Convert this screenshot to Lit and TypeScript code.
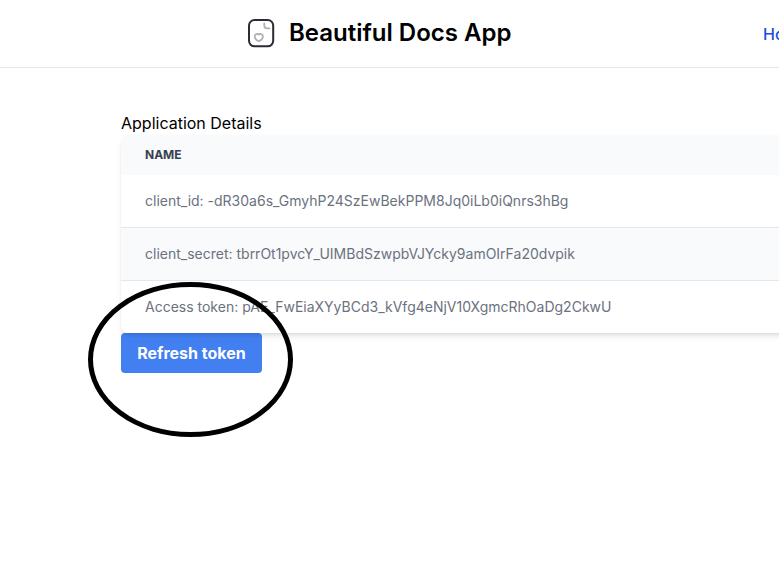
import { LitElement, html, css } from "lit";
import { customElement, property } from "lit/decorators.js";

@customElement("site-header")
class SiteHeader extends LitElement {
  static styles = css`
    :host {
      display: block;
    }
    header {
      box-sizing: border-box;
      display: flex;
      align-items: center;
      height: 68px;
      padding: 0 0 2px 248px;
      border-bottom: 1px solid #e5e7eb;
      white-space: nowrap;
    }
    .logo {
      display: block;
      width: 27px;
      height: 30px;
      flex: none;
    }
    .title {
      margin-left: 14px;
      width: 222px;
      flex: none;
      font-size: 24px;
      line-height: 32px;
      font-weight: 600;
      color: #000;
    }
    .link {
      margin: 2px 0 0 252px;
      font-size: 16px;
      line-height: 24px;
      font-weight: 500;
      color: #1d4ed8;
      text-decoration: none;
    }
  `;

  render() {
    return html`
      <header>
        <svg class="logo" viewBox="0 0 27 30" fill="none" stroke-linecap="round" stroke-linejoin="round">
          <rect x="1" y="2" width="24.2" height="26.3" rx="5.5" stroke="#272c35" stroke-width="2" />
          <path d="M16.3 5.3v2.4q0 2.7 2.7 2.7h2.5" stroke="#b0b0b0" stroke-width="1.8" />
          <path
            d="M10.8 16.6C9.5 15.3 6.7 15.8 6.7 18.6C6.7 21 9.2 22.9 10.8 23.1C12.4 22.9 14.9 21 14.9 18.6C14.9 15.8 12.1 15.3 10.8 16.6Z"
            stroke="#b0b0b0"
            stroke-width="1.8"
          />
        </svg>
        <span class="title">Beautiful Docs App</span>
        <a class="link">Home</a>
      </header>
    `;
  }
}

@customElement("details-table")
class DetailsTable extends LitElement {
  @property({ attribute: false }) rows: string[] = [];

  static styles = css`
    :host {
      display: block;
      position: relative;
      border-radius: 8px;
      box-shadow: 0 4px 6px -1px rgb(0 0 0 / 0.1), 0 2px 4px -2px rgb(0 0 0 / 0.1);
    }
    .clip {
      border-radius: 8px;
      overflow: hidden;
      background: #fff;
      color: #6b7280;
      font-size: 14px;
      line-height: 20px;
      white-space: nowrap;
    }
    .head {
      padding: 12px 24px;
      background: #f9fafb;
      color: #374151;
      font-size: 12px;
      line-height: 16px;
      font-weight: 700;
      text-transform: uppercase;
    }
    .row {
      padding: 16px 24px;
      border-bottom: 1px solid #e5e7eb;
    }
    .row:nth-child(odd) {
      background: #f9fafb;
    }
    .row:last-child {
      border-bottom: 0;
    }
  `;

  render() {
    return html`
      <div class="clip">
        <div class="head">Name</div>
        ${this.rows.map((row) => html`<div class="row">${row}</div>`)}
      </div>
    `;
  }
}

@customElement("app-root")
class AppRoot extends LitElement {
  static styles = css`
    :host {
      display: block;
      position: relative;
      height: 572px;
      overflow: hidden;
      background: #fff;
      font-family: Inter, sans-serif;
      color: #000;
    }
    main {
      width: 900px;
      padding: 43px 0 0 121px;
    }
    .heading {
      font-size: 16px;
      line-height: 24px;
    }
    .refresh {
      display: block;
      width: 141px;
      height: 40px;
      padding: 0;
      border: 0;
      border-radius: 4px;
      background: #4280f2;
      color: #fff;
      font: 700 16px/24px Inter, sans-serif;
      white-space: nowrap;
    }
    .marker {
      position: absolute;
      left: 88px;
      top: 282px;
      width: 205px;
      height: 155px;
      pointer-events: none;
    }
  `;

  private rows = [
    "client_id: -dR30a6s_GmyhP24SzEwBekPPM8Jq0iLb0iQnrs3hBg",
    "client_secret: tbrrOt1pvcY_UIMBdSzwpbVJYcky9amOIrFa20dvpik",
    "Access token: pAE_FwEiaXYyBCd3_kVfg4eNjV10XgmcRhOaDg2CkwU",
  ];

  render() {
    return html`
      <site-header></site-header>
      <main>
        <div class="heading">Application Details</div>
        <details-table .rows=${this.rows}></details-table>
        <button class="refresh">Refresh token</button>
      </main>
      <svg class="marker" viewBox="0 0 205 155" fill="none">
        <ellipse cx="102.5" cy="77.5" rx="100" ry="75" stroke="#000" stroke-width="5" />
      </svg>
    `;
  }
}
